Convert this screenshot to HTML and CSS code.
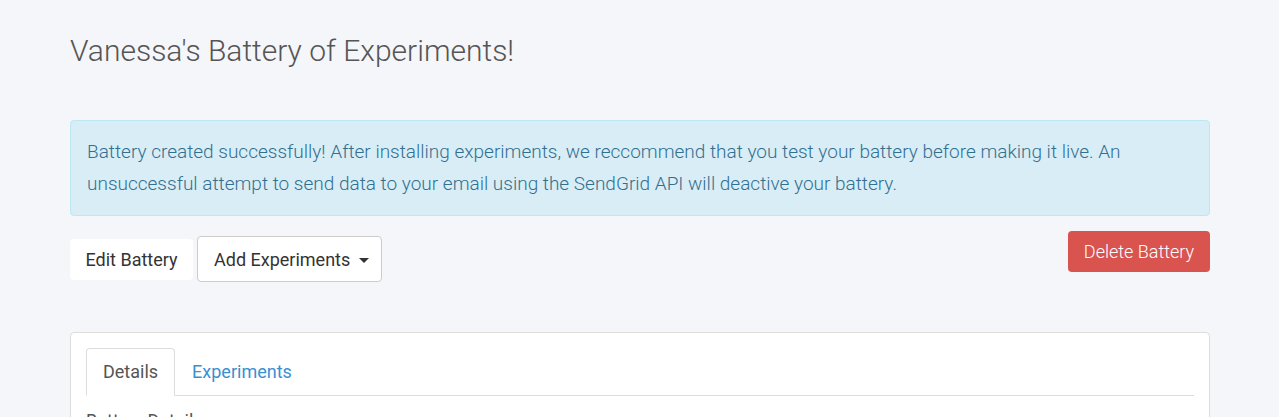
FILE: index.html
```html
<!DOCTYPE html>
<html>
<head>
<meta charset="utf-8">
<link rel="stylesheet" href="styles.css">
</head>
<body>
<div class="container">
  <h2 class="title">Vanessa's Battery of Experiments!</h2>
  <div class="alert">Battery created successfully! After installing experiments, we reccommend that you test your battery before making it live. An unsuccessful attempt to send data to your email using the SendGrid API will deactive your battery.</div>
  <div class="actions">
    <div class="left-actions">
      <button class="btn btn-plain">Edit Battery</button>
      <button class="btn btn-default"><span>Add Experiments</span><span class="caret"></span></button>
    </div>
    <button class="btn btn-danger">Delete Battery</button>
  </div>
  <div class="panel">
    <ul class="tabs">
      <li class="tab active">Details</li>
      <li class="tab">Experiments</li>
    </ul>
    <div class="tab-body">Battery Details</div>
  </div>
</div>
</body>
</html>
```
FILE: styles.css
```css
* { box-sizing: border-box; }
html, body { margin: 0; padding: 0; }
body {
  background: #f5f6fa;
  font-family: Roboto, "Liberation Sans", sans-serif;
  font-weight: 300;
  color: #555;
  overflow: hidden;
}
.container {
  width: 1140px;
  margin-left: 70px;
}
.title {
  margin: 0;
  padding-top: 31px;
  font-size: 30px;
  font-weight: 300;
  line-height: 40px;
  color: #555;
}
.alert {
  margin-top: 49px;
  background: #d9edf7;
  border: 1px solid #bce8f1;
  border-radius: 4px;
  color: #31708f;
  font-size: 19px;
  line-height: 32px;
  padding: 15px 16px;
  height: 96px;
}
.actions {
  display: flex;
  justify-content: space-between;
  align-items: flex-start;
  margin-top: 15px;
}
.left-actions {
  display: flex;
  align-items: center;
  gap: 4px;
  padding-top: 5px;
}
.btn {
  font-family: Roboto, "Liberation Sans", sans-serif;
  font-weight: 400;
  font-size: 18px;
  border-radius: 4px;
  cursor: pointer;
  white-space: nowrap;
}
.btn-plain {
  background: #fff;
  border: none;
  color: #333;
  height: 41px;
  width: 123px;
  padding: 0;
  text-align: center;
}
.btn-default {
  background: #fff;
  border: 1px solid #ccc;
  color: #333;
  height: 46px;
  width: 185px;
  padding: 0 0 0 16px;
  display: flex;
  align-items: center;
  justify-content: flex-start;
  gap: 9px;
}
.caret {
  display: inline-block;
  width: 0; height: 0;
  border-left: 5px solid transparent;
  border-right: 5px solid transparent;
  border-top: 5px solid #333;
  margin-top: 2px;
}
.btn-danger {
  background: #d9534f;
  border: none;
  color: #fff;
  font-weight: 300;
  height: 41px;
  width: 142px;
  padding: 0;
  text-align: center;
}
.panel {
  margin-top: 50px;
  background: #fff;
  border: 1px solid #ddd;
  border-radius: 4px;
  padding: 15px 15px 0;
  height: 120px;
}
.tabs {
  list-style: none;
  margin: 0;
  padding: 0;
  display: flex;
  border-bottom: 1px solid #ddd;
}
.tab {
  font-size: 18px;
  font-weight: 400;
  padding: 0 16px;
  height: 48px;
  line-height: 46px;
  margin-bottom: -1px;
  color: #3b8fd1;
  border: 1px solid transparent;
  border-radius: 4px 4px 0 0;
}
.tab.active {
  color: #555;
  background: #fff;
  border-color: #ddd;
  border-bottom-color: #fff;
}
.tab-body {
  padding-top: 14px;
  font-size: 18px;
  font-weight: 400;
  color: #555;
}
```
